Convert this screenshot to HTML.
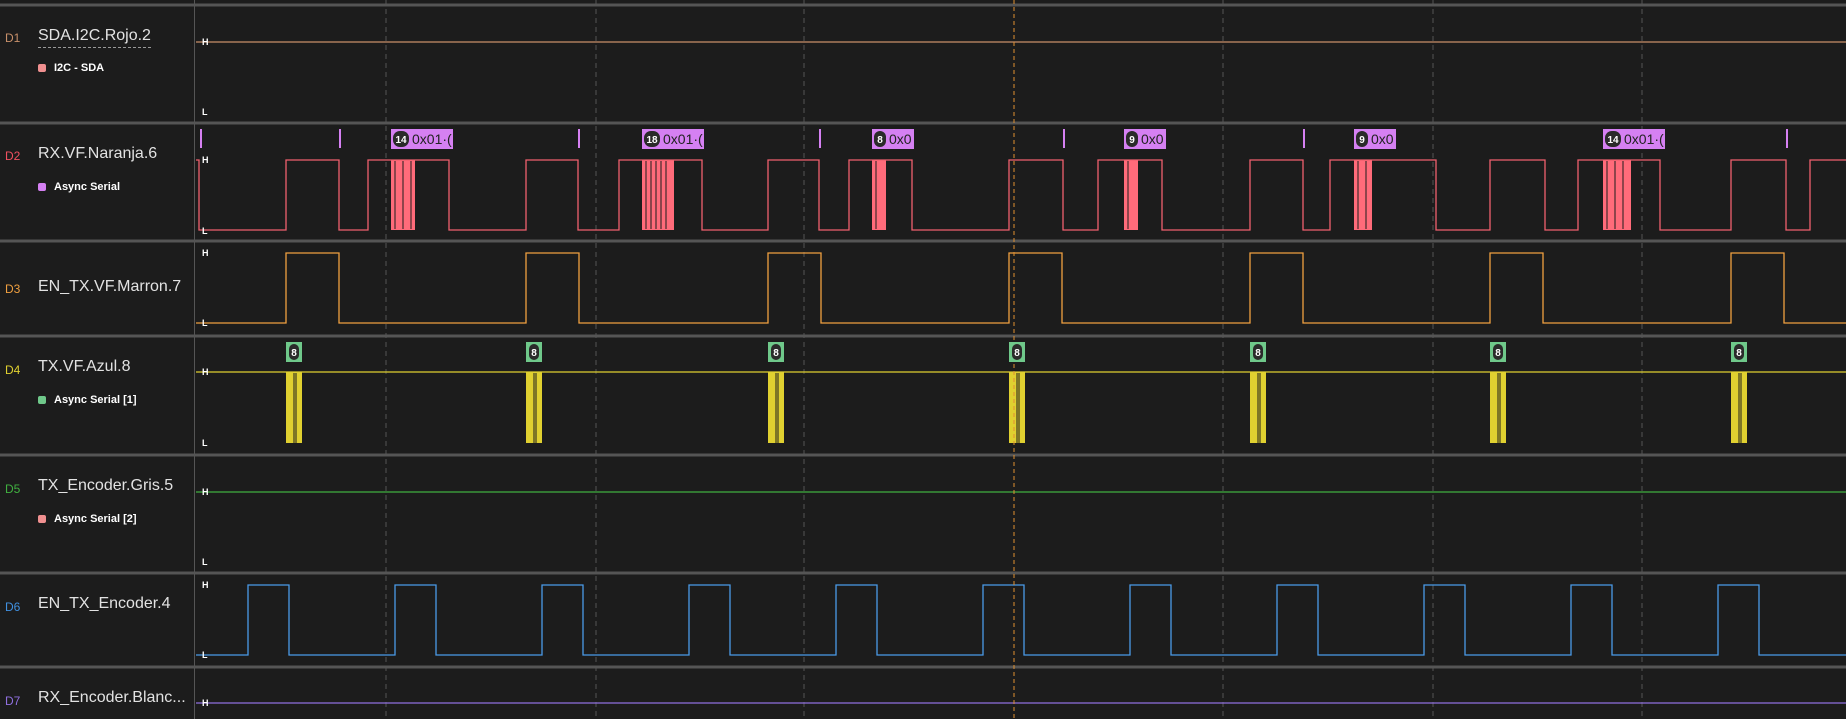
<!DOCTYPE html>
<html><head><meta charset="utf-8"><style>
html,body{margin:0;padding:0;background:#1c1c1c;width:1846px;height:719px;overflow:hidden;font-family:"Liberation Sans",sans-serif}
.wrap{position:relative;width:1846px;height:719px}
.d{position:absolute;left:5px;font-size:12px}
.n{position:absolute;left:38px;font-size:16px;color:#e2e2e2}
.s{position:absolute;left:38px;font-size:11px;color:#fff;font-weight:bold}
.s i{display:inline-block;width:8px;height:8px;border-radius:2px;margin-right:8px;vertical-align:-1px}
svg{position:absolute;left:0;top:0}
</style></head><body><div class="wrap">
<svg width="1846" height="719" id="sv">
<g stroke="#555" stroke-width="3">
<line x1="0" y1="5" x2="1846" y2="5"/><line x1="0" y1="123" x2="1846" y2="123"/><line x1="0" y1="241" x2="1846" y2="241"/><line x1="0" y1="336" x2="1846" y2="336"/><line x1="0" y1="455" x2="1846" y2="455"/><line x1="0" y1="573" x2="1846" y2="573"/><line x1="0" y1="667" x2="1846" y2="667"/>
</g>
<line x1="194.5" y1="0" x2="194.5" y2="719" stroke="#555" stroke-width="1"/>
<g stroke="#555" stroke-width="1" stroke-dasharray="5,4">
<line x1="386" y1="0" x2="386" y2="719"/><line x1="596" y1="0" x2="596" y2="719"/><line x1="804" y1="0" x2="804" y2="719"/><line x1="1223" y1="0" x2="1223" y2="719"/><line x1="1433" y1="0" x2="1433" y2="719"/><line x1="1642" y1="0" x2="1642" y2="719"/>
</g>
<g id="waves" fill="none" stroke-width="1.3"></g>
<line x1="1014" y1="0" x2="1014" y2="719" stroke="#e09030" stroke-width="1" stroke-dasharray="4,3"/>
<g font-size="9" font-weight="bold" fill="#fff" font-family="Liberation Sans">
<text x="202" y="45">H</text><text x="202" y="115">L</text>
<text x="202" y="163">H</text><text x="202" y="234">L</text>
<text x="202" y="256">H</text><text x="202" y="326">L</text>
<text x="202" y="375">H</text><text x="202" y="446">L</text>
<text x="202" y="495">H</text><text x="202" y="565">L</text>
<text x="202" y="588">H</text><text x="202" y="658">L</text>
<text x="202" y="706">H</text>
</g>
<g id="labs" font-family="Liberation Sans">
<g transform="translate(391,129)"><rect width="62" height="20" fill="#d580f2"/><rect x="2" y="2" width="16" height="16" rx="7" fill="#2a2a2a"/><text x="10" y="14" font-size="10" font-weight="bold" fill="#fff" text-anchor="middle">14</text><text x="21" y="15" font-size="14" fill="#222">0x01·(</text></g>
<g transform="translate(642,129)"><rect width="62" height="20" fill="#d580f2"/><rect x="2" y="2" width="16" height="16" rx="7" fill="#2a2a2a"/><text x="10" y="14" font-size="10" font-weight="bold" fill="#fff" text-anchor="middle">18</text><text x="21" y="15" font-size="14" fill="#222">0x01·(</text></g>
<g transform="translate(872,129)"><rect width="42" height="20" fill="#d580f2"/><rect x="2" y="2" width="12" height="16" rx="6" fill="#2a2a2a"/><text x="8" y="14" font-size="10" font-weight="bold" fill="#fff" text-anchor="middle">8</text><text x="17" y="15" font-size="14" fill="#222">0x0</text></g>
<g transform="translate(1124,129)"><rect width="42" height="20" fill="#d580f2"/><rect x="2" y="2" width="12" height="16" rx="6" fill="#2a2a2a"/><text x="8" y="14" font-size="10" font-weight="bold" fill="#fff" text-anchor="middle">9</text><text x="17" y="15" font-size="14" fill="#222">0x0</text></g>
<g transform="translate(1354,129)"><rect width="42" height="20" fill="#d580f2"/><rect x="2" y="2" width="12" height="16" rx="6" fill="#2a2a2a"/><text x="8" y="14" font-size="10" font-weight="bold" fill="#fff" text-anchor="middle">9</text><text x="17" y="15" font-size="14" fill="#222">0x0</text></g>
<g transform="translate(1603,129)"><rect width="62" height="20" fill="#d580f2"/><rect x="2" y="2" width="16" height="16" rx="7" fill="#2a2a2a"/><text x="10" y="14" font-size="10" font-weight="bold" fill="#fff" text-anchor="middle">14</text><text x="21" y="15" font-size="14" fill="#222">0x01·(</text></g>
<g transform="translate(286,342)"><rect width="16" height="20" fill="#6fc88a"/><rect x="3" y="2" width="10" height="16" rx="5" fill="#2a2a2a"/><text x="8" y="14" font-size="10" font-weight="bold" fill="#fff" text-anchor="middle">8</text></g>
<g transform="translate(526,342)"><rect width="16" height="20" fill="#6fc88a"/><rect x="3" y="2" width="10" height="16" rx="5" fill="#2a2a2a"/><text x="8" y="14" font-size="10" font-weight="bold" fill="#fff" text-anchor="middle">8</text></g>
<g transform="translate(768,342)"><rect width="16" height="20" fill="#6fc88a"/><rect x="3" y="2" width="10" height="16" rx="5" fill="#2a2a2a"/><text x="8" y="14" font-size="10" font-weight="bold" fill="#fff" text-anchor="middle">8</text></g>
<g transform="translate(1009,342)"><rect width="16" height="20" fill="#6fc88a"/><rect x="3" y="2" width="10" height="16" rx="5" fill="#2a2a2a"/><text x="8" y="14" font-size="10" font-weight="bold" fill="#fff" text-anchor="middle">8</text></g>
<g transform="translate(1250,342)"><rect width="16" height="20" fill="#6fc88a"/><rect x="3" y="2" width="10" height="16" rx="5" fill="#2a2a2a"/><text x="8" y="14" font-size="10" font-weight="bold" fill="#fff" text-anchor="middle">8</text></g>
<g transform="translate(1490,342)"><rect width="16" height="20" fill="#6fc88a"/><rect x="3" y="2" width="10" height="16" rx="5" fill="#2a2a2a"/><text x="8" y="14" font-size="10" font-weight="bold" fill="#fff" text-anchor="middle">8</text></g>
<g transform="translate(1731,342)"><rect width="16" height="20" fill="#6fc88a"/><rect x="3" y="2" width="10" height="16" rx="5" fill="#2a2a2a"/><text x="8" y="14" font-size="10" font-weight="bold" fill="#fff" text-anchor="middle">8</text></g>
</g>
</svg>
<div class="d" style="top:31px;color:#c8906a">D1</div><div class="n" style="top:27px;border-bottom:1px dashed #999;padding-bottom:2px">SDA.I2C.Rojo.2</div><div class="s" style="top:62px"><i style="background:#f09090"></i>I2C - SDA</div>
<div class="d" style="top:149px;color:#f05060">D2</div><div class="n" style="top:145px">RX.VF.Naranja.6</div><div class="s" style="top:181px"><i style="background:#d580f2"></i>Async Serial</div>
<div class="d" style="top:282px;color:#f0a040">D3</div><div class="n" style="top:278px">EN_TX.VF.Marron.7</div>
<div class="d" style="top:363px;color:#e0d030">D4</div><div class="n" style="top:358px">TX.VF.Azul.8</div><div class="s" style="top:394px"><i style="background:#6fc88a"></i>Async Serial [1]</div>
<div class="d" style="top:482px;color:#40b040">D5</div><div class="n" style="top:477px">TX_Encoder.Gris.5</div><div class="s" style="top:513px"><i style="background:#f09090"></i>Async Serial [2]</div>
<div class="d" style="top:600px;color:#4090e0">D6</div><div class="n" style="top:595px">EN_TX_Encoder.4</div>
<div class="d" style="top:694px;color:#9070e0">D7</div><div class="n" style="top:689px">RX_Encoder.Blanc...</div>
</div>
<script>
var W=document.getElementById('waves'),ns='http://www.w3.org/2000/svg';
function el(t,a){var e=document.createElementNS(ns,t);for(var k in a)e.setAttribute(k,a[k]);W.appendChild(e);return e;}
el('line',{x1:196,y1:42,x2:1846,y2:42,stroke:'#c8906a'});
el('line',{x1:196,y1:492,x2:1846,y2:492,stroke:'#40b040'});
el('line',{x1:196,y1:703,x2:1846,y2:703,stroke:'#9070e0'});
el('line',{x1:196,y1:372,x2:1846,y2:372,stroke:'#e0d030'});
var R=[286,526,768,1009,1250,1490,1731];
// D3
var H3=253,L3=323,d='M196 '+L3;
R.forEach(function(r){d+=' H'+r+' V'+H3+' H'+(r+53)+' V'+L3;});d+=' H1846';
el('path',{d:d,stroke:'#f0a040'});
// D2
var H2=160,L2=230;
var P=[[339,368,391,415,449],[578,619,642,674,702],[819,849,872,886,912],[1063,1098,1124,1138,1162],[1303,1330,1354,1372,1436],[1545,1578,1603,1631,1660]];
d='M196 '+H2+' H199 V'+L2;
P.forEach(function(p,i){d+=' H'+R[i]+' V'+H2+' H'+p[0]+' V'+L2+' H'+p[1]+' V'+H2+' H'+p[4]+' V'+L2;
 el('rect',{x:p[2],y:H2,width:p[3]-p[2],height:L2-H2,fill:'#ff6b7a',stroke:'none'});
 for(var x=p[2]+4;x<p[3]-3;x+=(i==1?5:8))el('line',{x1:x,y1:H2+1,x2:x,y2:L2-1,stroke:'#1c1c1c','stroke-width':1});
});
d+=' H1731 V'+H2+' H1786 V'+L2+' H1810 V'+H2+' H1846';
el('path',{d:d,stroke:'#f0606e'});
[200,339,578,819,1063,1303,1786].forEach(function(x){el('rect',{x:x,y:129,width:2,height:19,fill:'#d580f2',stroke:'none'});});
// D4 bursts
R.forEach(function(r){el('rect',{x:r,y:372,width:16,height:71,fill:'#e0d030',stroke:'none'});
 el('line',{x1:r+8,y1:373,x2:r+8,y2:443,stroke:'#1c1c1c','stroke-width':1});
 el('line',{x1:r+10,y1:373,x2:r+10,y2:443,stroke:'#1c1c1c','stroke-width':1});});
// D6
var H6=585,L6=655;d='M196 '+L6;
for(var x=248;x<1846;x+=147){d+=' H'+x+' V'+H6+' H'+Math.min(x+41,1846)+' V'+L6;}d+=' H1846';
el('path',{d:d,stroke:'#4a9ae8'});
</script>
</body></html>
